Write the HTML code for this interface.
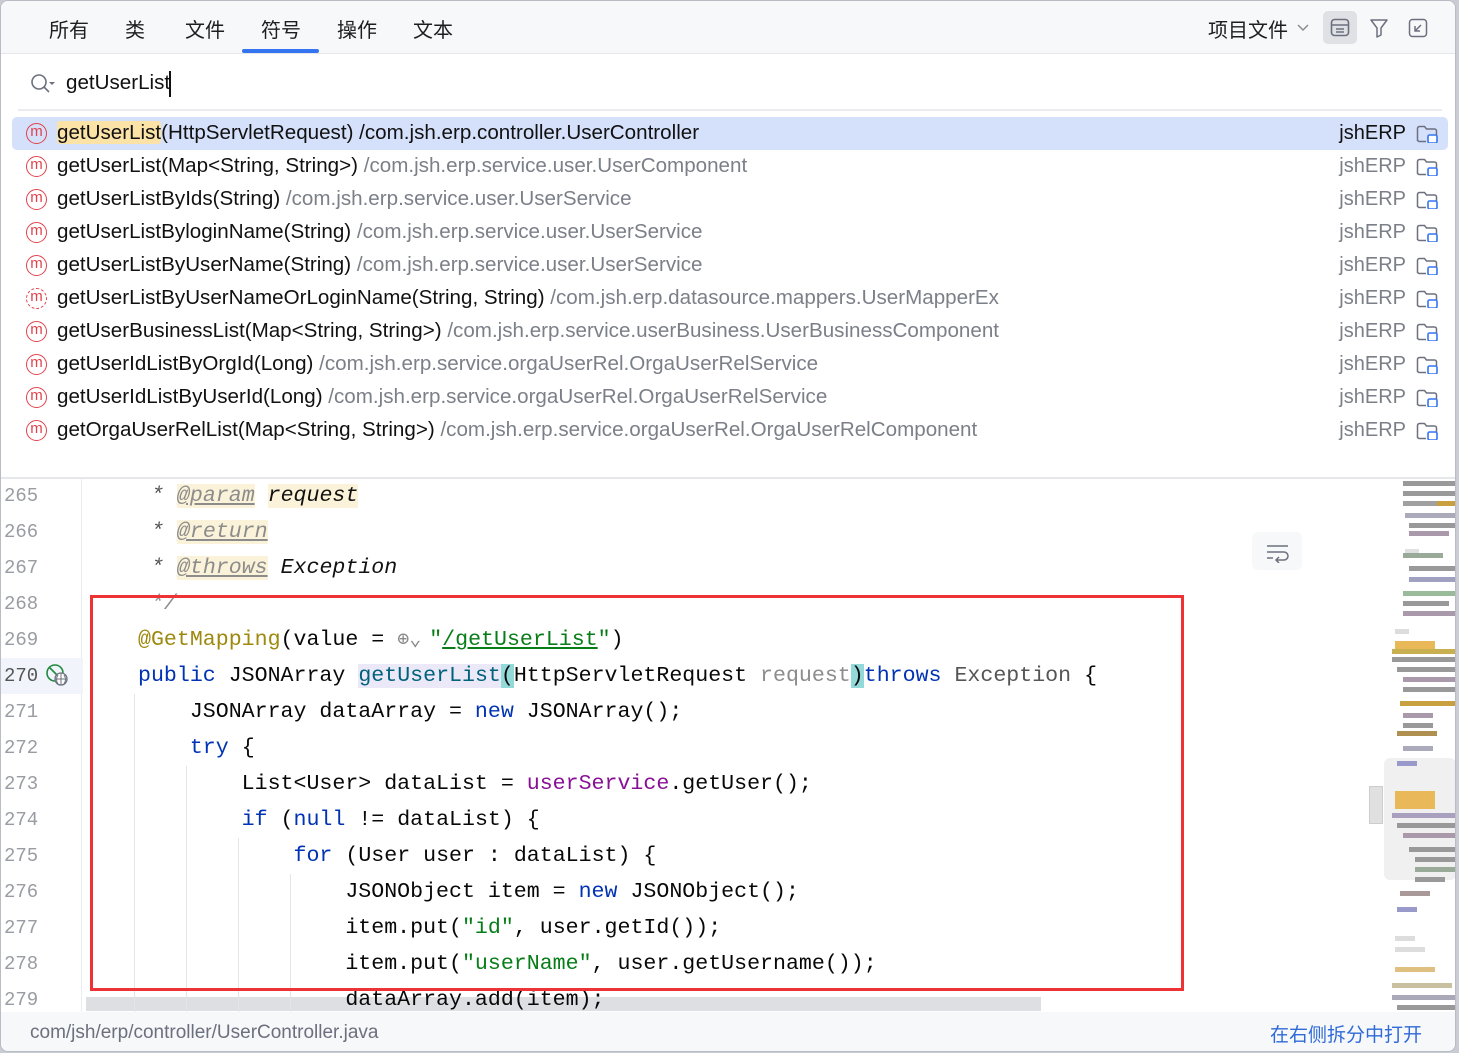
<!DOCTYPE html>
<html><head><meta charset="utf-8"><style>
*{margin:0;padding:0;box-sizing:border-box}
body{width:1459px;height:1053px;background:#c9ccd3;position:relative;overflow:hidden;font-family:"Liberation Sans","Noto Sans CJK SC",sans-serif}
#win{position:absolute;left:0;top:0;width:1456px;height:1052px;background:#fff;border:1px solid #b9bcc4;border-radius:8px;overflow:hidden}
.abs{position:absolute}
#tabs{left:0;top:0;width:100%;height:53px;background:#f7f8fa;border-bottom:1px solid #e6e7ea}
.tab{position:absolute;top:13px;font-size:20px;color:#1e1e1e;font-family:"Noto Sans CJK SC",sans-serif}
.row{position:absolute;left:11px;width:1436px;height:33px;font-size:20.6px;color:#111;white-space:nowrap}
.row .t{position:absolute;left:45px;top:4px}
.row .g{color:#7b7f88}
.ico{position:absolute;left:14px;top:6px;width:21px;height:21px;border:1.6px solid #e0424c;border-radius:50%;color:#e0424c;font-size:15px;line-height:16px;text-align:center}
.proj{position:absolute;right:42px;top:5px;color:#7b7f88;font-size:20px}
.fold{position:absolute;right:10px;top:8px;width:22px;height:18px}
.code{position:absolute;font-family:"Liberation Mono",monospace;font-size:21.6px;white-space:pre;color:#080808;height:36px;line-height:36px}
.ln{position:absolute;left:3px;font-family:"Liberation Mono",monospace;font-size:19px;color:#9a9ca3;height:36px;line-height:36px}
.kw{color:#0033b3}.cm{color:#8c8c8c;font-style:italic}.tag{color:#8c8c8c;text-decoration:underline;background:#fbf3d9}
.an{color:#9e880d}.st{color:#067d17}.fld{color:#871094}.pm{color:#8c8c8c}
.guide{position:absolute;width:1px;background:#e4e5e8}
.mm{position:absolute;height:5px}
</style></head><body>
<div id="win">
<div id="tabs" class="abs">
<div class="tab" style="left:48px">所有</div>
<div class="tab" style="left:124px">类</div>
<div class="tab" style="left:184px">文件</div>
<div class="tab" style="left:260px">符号</div>
<div class="tab" style="left:336px">操作</div>
<div class="tab" style="left:412px">文本</div>
<div class="abs" style="left:241px;top:48px;width:77px;height:4px;background:#3574f0;border-radius:2px"></div>
<div class="tab" style="left:1207px">项目文件</div>
<svg class="abs" style="left:1296px;top:22px" width="12" height="10"><path d="M1 2l5 5 5-5" fill="none" stroke="#888" stroke-width="1.4"/></svg>
<div class="abs" style="left:1322px;top:10px;width:34px;height:33px;background:#dfe1e5;border-radius:5px"></div>
<svg class="abs" style="left:1329px;top:17px" width="20" height="19"><rect x="1.5" y="1.5" width="17" height="16" rx="3" fill="none" stroke="#6c707e" stroke-width="1.6"/><path d="M1.5 7h17M6 11h8M6 14h8" stroke="#6c707e" stroke-width="1.4"/></svg>
<svg class="abs" style="left:1368px;top:17px" width="20" height="20"><path d="M2 2h16l-6 8v7l-4 2v-9z" fill="none" stroke="#6c707e" stroke-width="1.5" stroke-linejoin="round"/></svg>
<svg class="abs" style="left:1407px;top:17px" width="20" height="20"><rect x="1.5" y="1.5" width="17" height="17" rx="3" fill="none" stroke="#6c707e" stroke-width="1.5"/><path d="M13 7l-6 6M7 8v5h5" fill="none" stroke="#6c707e" stroke-width="1.5"/></svg>
</div>
<svg class="abs" style="left:29px;top:72px" width="26" height="22"><circle cx="9" cy="9" r="7" fill="none" stroke="#6c707e" stroke-width="1.6"/><path d="M14 14l5 5" stroke="#6c707e" stroke-width="1.6"/><path d="M19 9l3 3 3-3z" fill="#6c707e"/></svg>
<div class="abs" style="left:65px;top:70px;font-size:20.6px;color:#111">getUserList</div>
<div class="abs" style="left:168px;top:70px;width:1.5px;height:26px;background:#111"></div>
<div class="abs" style="left:17px;top:108px;width:1424px;height:2px;background:#ebecf0"></div>

<div class="row" style="top:116px;background:#d5e1fb;border-radius:5px"><div class="ico">m</div><div class="t"><span style="background:#fbe3a8;border-radius:3px">getUserList</span>(HttpServletRequest) /com.jsh.erp.controller.UserController</div><div class="proj" style="color:#111">jshERP</div><svg class="fold" viewBox="0 0 22 18"><path d="M1.5 16V3.5a2 2 0 0 1 2-2h5l2 2.5h8a2 2 0 0 1 2 2V10M10 16.5H3.5a2 2 0 0 1-2-2" fill="none" stroke="#6c707e" stroke-width="1.5"/><rect x="12" y="10" width="9" height="8" rx="1.5" fill="#fff" stroke="#3574f0" stroke-width="1.6"/></svg></div>
<div class="row" style="top:149px"><div class="ico">m</div><div class="t">getUserList(Map&lt;String, String&gt;) <span class="g">/com.jsh.erp.service.user.UserComponent</span></div><div class="proj">jshERP</div><svg class="fold" viewBox="0 0 22 18"><path d="M1.5 16V3.5a2 2 0 0 1 2-2h5l2 2.5h8a2 2 0 0 1 2 2V10M10 16.5H3.5a2 2 0 0 1-2-2" fill="none" stroke="#6c707e" stroke-width="1.5"/><rect x="12" y="10" width="9" height="8" rx="1.5" fill="#fff" stroke="#3574f0" stroke-width="1.6"/></svg></div>
<div class="row" style="top:182px"><div class="ico">m</div><div class="t">getUserListByIds(String) <span class="g">/com.jsh.erp.service.user.UserService</span></div><div class="proj">jshERP</div><svg class="fold" viewBox="0 0 22 18"><path d="M1.5 16V3.5a2 2 0 0 1 2-2h5l2 2.5h8a2 2 0 0 1 2 2V10M10 16.5H3.5a2 2 0 0 1-2-2" fill="none" stroke="#6c707e" stroke-width="1.5"/><rect x="12" y="10" width="9" height="8" rx="1.5" fill="#fff" stroke="#3574f0" stroke-width="1.6"/></svg></div>
<div class="row" style="top:215px"><div class="ico">m</div><div class="t">getUserListByloginName(String) <span class="g">/com.jsh.erp.service.user.UserService</span></div><div class="proj">jshERP</div><svg class="fold" viewBox="0 0 22 18"><path d="M1.5 16V3.5a2 2 0 0 1 2-2h5l2 2.5h8a2 2 0 0 1 2 2V10M10 16.5H3.5a2 2 0 0 1-2-2" fill="none" stroke="#6c707e" stroke-width="1.5"/><rect x="12" y="10" width="9" height="8" rx="1.5" fill="#fff" stroke="#3574f0" stroke-width="1.6"/></svg></div>
<div class="row" style="top:248px"><div class="ico">m</div><div class="t">getUserListByUserName(String) <span class="g">/com.jsh.erp.service.user.UserService</span></div><div class="proj">jshERP</div><svg class="fold" viewBox="0 0 22 18"><path d="M1.5 16V3.5a2 2 0 0 1 2-2h5l2 2.5h8a2 2 0 0 1 2 2V10M10 16.5H3.5a2 2 0 0 1-2-2" fill="none" stroke="#6c707e" stroke-width="1.5"/><rect x="12" y="10" width="9" height="8" rx="1.5" fill="#fff" stroke="#3574f0" stroke-width="1.6"/></svg></div>
<div class="row" style="top:281px"><div class="ico" style="border-style:dashed">m</div><div class="t">getUserListByUserNameOrLoginName(String, String) <span class="g">/com.jsh.erp.datasource.mappers.UserMapperEx</span></div><div class="proj">jshERP</div><svg class="fold" viewBox="0 0 22 18"><path d="M1.5 16V3.5a2 2 0 0 1 2-2h5l2 2.5h8a2 2 0 0 1 2 2V10M10 16.5H3.5a2 2 0 0 1-2-2" fill="none" stroke="#6c707e" stroke-width="1.5"/><rect x="12" y="10" width="9" height="8" rx="1.5" fill="#fff" stroke="#3574f0" stroke-width="1.6"/></svg></div>
<div class="row" style="top:314px"><div class="ico">m</div><div class="t">getUserBusinessList(Map&lt;String, String&gt;) <span class="g">/com.jsh.erp.service.userBusiness.UserBusinessComponent</span></div><div class="proj">jshERP</div><svg class="fold" viewBox="0 0 22 18"><path d="M1.5 16V3.5a2 2 0 0 1 2-2h5l2 2.5h8a2 2 0 0 1 2 2V10M10 16.5H3.5a2 2 0 0 1-2-2" fill="none" stroke="#6c707e" stroke-width="1.5"/><rect x="12" y="10" width="9" height="8" rx="1.5" fill="#fff" stroke="#3574f0" stroke-width="1.6"/></svg></div>
<div class="row" style="top:347px"><div class="ico">m</div><div class="t">getUserIdListByOrgId(Long) <span class="g">/com.jsh.erp.service.orgaUserRel.OrgaUserRelService</span></div><div class="proj">jshERP</div><svg class="fold" viewBox="0 0 22 18"><path d="M1.5 16V3.5a2 2 0 0 1 2-2h5l2 2.5h8a2 2 0 0 1 2 2V10M10 16.5H3.5a2 2 0 0 1-2-2" fill="none" stroke="#6c707e" stroke-width="1.5"/><rect x="12" y="10" width="9" height="8" rx="1.5" fill="#fff" stroke="#3574f0" stroke-width="1.6"/></svg></div>
<div class="row" style="top:380px"><div class="ico">m</div><div class="t">getUserIdListByUserId(Long) <span class="g">/com.jsh.erp.service.orgaUserRel.OrgaUserRelService</span></div><div class="proj">jshERP</div><svg class="fold" viewBox="0 0 22 18"><path d="M1.5 16V3.5a2 2 0 0 1 2-2h5l2 2.5h8a2 2 0 0 1 2 2V10M10 16.5H3.5a2 2 0 0 1-2-2" fill="none" stroke="#6c707e" stroke-width="1.5"/><rect x="12" y="10" width="9" height="8" rx="1.5" fill="#fff" stroke="#3574f0" stroke-width="1.6"/></svg></div>
<div class="row" style="top:413px"><div class="ico">m</div><div class="t">getOrgaUserRelList(Map&lt;String, String&gt;) <span class="g">/com.jsh.erp.service.orgaUserRel.OrgaUserRelComponent</span></div><div class="proj">jshERP</div><svg class="fold" viewBox="0 0 22 18"><path d="M1.5 16V3.5a2 2 0 0 1 2-2h5l2 2.5h8a2 2 0 0 1 2 2V10M10 16.5H3.5a2 2 0 0 1-2-2" fill="none" stroke="#6c707e" stroke-width="1.5"/><rect x="12" y="10" width="9" height="8" rx="1.5" fill="#fff" stroke="#3574f0" stroke-width="1.6"/></svg></div>

<div class="abs" style="left:0;top:476px;width:100%;height:2px;background:#e6e7ea"></div>
<!-- gutter -->
<div class="abs" style="left:80px;top:478px;width:1px;height:534px;background:#ebecf0"></div>
<div class="abs" style="left:0;top:657px;width:82px;height:36px;background:#f2f4fb"></div>
<div class="ln" style="top:477px">265</div><div class="ln" style="top:513px">266</div><div class="ln" style="top:549px">267</div><div class="ln" style="top:585px">268</div><div class="ln" style="top:621px">269</div><div class="ln" style="top:657px;color:#555">270</div><div class="ln" style="top:693px">271</div><div class="ln" style="top:729px">272</div><div class="ln" style="top:765px">273</div><div class="ln" style="top:801px">274</div><div class="ln" style="top:837px">275</div><div class="ln" style="top:873px">276</div><div class="ln" style="top:909px">277</div><div class="ln" style="top:945px">278</div><div class="ln" style="top:981px">279</div>
<svg class="abs" style="left:44px;top:662px" width="24" height="24"><circle cx="10" cy="10" r="8" fill="none" stroke="#208a3c" stroke-width="1.6"/><path d="M4 4l10 10" stroke="#208a3c" stroke-width="1.6"/><circle cx="16" cy="16" r="6" fill="#fff" stroke="#6c707e" stroke-width="1.3"/><path d="M10 16h12M16 10v12M13 12c-2 3-2 6 0 9M19 12c2 3 2 6 0 9" fill="none" stroke="#6c707e" stroke-width="1"/></svg>
<!-- scrollbar (behind text) -->
<div class="abs" style="left:85px;top:996px;width:955px;height:14px;background:#dedfe2"></div>
<!-- guides -->
<div class="guide" style="left:133px;top:693px;height:318px"></div>
<div class="guide" style="left:185px;top:765px;height:246px"></div>
<div class="guide" style="left:237px;top:837px;height:174px"></div>
<div class="guide" style="left:289px;top:873px;height:138px"></div>
<!-- code -->
<div class="code cm" style="left:137px;top:477px"> <span style="color:#555">*</span> <span class="tag">@param</span> <span style="background:#fbf3d9;color:#111">request</span></div>
<div class="code cm" style="left:137px;top:513px"> <span style="color:#555">*</span> <span class="tag">@return</span></div>
<div class="code cm" style="left:137px;top:549px"> <span style="color:#555">*</span> <span class="tag">@throws</span> <span style="color:#111">Exception</span></div>
<div class="code cm" style="left:137px;top:585px"> */</div>
<div class="code" style="left:137px;top:621px"><span class="an">@GetMapping</span>(value = <span style="display:inline-block;width:32px;color:#888;font-size:20px;font-style:normal">⊕⌄</span><span class="st">"<u>/getUserList</u>"</span>)</div>
<div class="code" style="left:137px;top:657px"><span class="kw">public</span> JSONArray <span style="background:#ebe8f8;color:#00627a">getUserList</span><span style="background:#93d9d9">(</span>HttpServletRequest <span class="pm">request</span><span style="background:#93d9d9">)</span><span class="kw">throws</span> <span style="color:#555">Exception</span> {</div>
<div class="code" style="left:137px;top:693px">    JSONArray dataArray = <span class="kw">new</span> JSONArray();</div>
<div class="code" style="left:137px;top:729px">    <span class="kw">try</span> {</div>
<div class="code" style="left:137px;top:765px">        List&lt;User&gt; dataList = <span class="fld">userService</span>.getUser();</div>
<div class="code" style="left:137px;top:801px">        <span class="kw">if</span> (<span class="kw">null</span> != dataList) {</div>
<div class="code" style="left:137px;top:837px">            <span class="kw">for</span> (User user : dataList) {</div>
<div class="code" style="left:137px;top:873px">                JSONObject item = <span class="kw">new</span> JSONObject();</div>
<div class="code" style="left:137px;top:909px">                item.put(<span class="st">"id"</span>, user.getId());</div>
<div class="code" style="left:137px;top:945px">                item.put(<span class="st">"userName"</span>, user.getUsername());</div>
<div class="code" style="left:137px;top:981px">                dataArray.add(item);</div>
<div class="abs" style="left:89px;top:594px;width:1094px;height:396px;border:3px solid #ee3336"></div>
<!-- wrap button -->
<div class="abs" style="left:1251px;top:531px;width:50px;height:38px;background:#f7f8fa;border-radius:6px"></div>
<svg class="abs" style="left:1265px;top:542px" width="24" height="20"><path d="M1 3h21M1 9h17a4 4 0 0 1 0 8h-7M1 15h6M13 14l-3 3 3 3" fill="none" stroke="#6c707e" stroke-width="1.5"/></svg>
<!-- minimap -->
<div class="abs" style="left:1383px;top:757px;width:72px;height:122px;background:#f0f0f0;border-radius:6px"></div>
<div class="abs" style="left:1368px;top:785px;width:14px;height:38px;background:#e0e0e0;border:1px solid #ccc"></div>
<div class="mm" style="left:1402px;top:480px;width:52px;background:#999"></div>
<div class="mm" style="left:1402px;top:490px;width:52px;background:#999"></div>
<div class="mm" style="left:1402px;top:500px;width:52px;background:#a0a0a0"></div>
<div class="mm" style="left:1436px;top:500px;width:18px;background:#c9a040"></div>
<div class="mm" style="left:1404px;top:512px;width:50px;background:#aab"></div>
<div class="mm" style="left:1408px;top:522px;width:46px;background:#999"></div>
<div class="mm" style="left:1408px;top:530px;width:40px;background:#a9a"></div>
<div class="mm" style="left:1404px;top:548px;width:14px;background:#e0e0e0"></div>
<div class="mm" style="left:1402px;top:552px;width:40px;background:#9a9"></div>
<div class="mm" style="left:1408px;top:565px;width:46px;background:#999"></div>
<div class="mm" style="left:1408px;top:576px;width:46px;background:#a0a0c0"></div>
<div class="mm" style="left:1402px;top:590px;width:52px;background:#9b9"></div>
<div class="mm" style="left:1402px;top:600px;width:46px;background:#999"></div>
<div class="mm" style="left:1402px;top:610px;width:52px;background:#a9a"></div>
<div class="mm" style="left:1394px;top:628px;width:14px;background:#ddd"></div>
<div class="mm" style="left:1394px;top:640px;width:40px;background:#e9b858;height:10px"></div>
<div class="mm" style="left:1391px;top:648px;width:64px;background:#c8b050"></div>
<div class="mm" style="left:1391px;top:656px;width:64px;background:#999"></div>
<div class="mm" style="left:1396px;top:666px;width:58px;background:#999"></div>
<div class="mm" style="left:1402px;top:676px;width:52px;background:#a9a"></div>
<div class="mm" style="left:1402px;top:686px;width:52px;background:#999"></div>
<div class="mm" style="left:1399px;top:700px;width:55px;background:#c9a040"></div>
<div class="mm" style="left:1402px;top:712px;width:30px;background:#a9a"></div>
<div class="mm" style="left:1402px;top:722px;width:30px;background:#999"></div>
<div class="mm" style="left:1396px;top:730px;width:40px;background:#b09050"></div>
<div class="mm" style="left:1402px;top:745px;width:30px;background:#aab"></div>
<div class="mm" style="left:1396px;top:760px;width:20px;background:#99c"></div>
<div class="mm" style="left:1394px;top:790px;width:40px;background:#e9b858;height:18px"></div>
<div class="mm" style="left:1391px;top:812px;width:64px;background:#a9a0c0"></div>
<div class="mm" style="left:1396px;top:822px;width:58px;background:#999"></div>
<div class="mm" style="left:1402px;top:832px;width:52px;background:#a9a"></div>
<div class="mm" style="left:1408px;top:846px;width:46px;background:#999"></div>
<div class="mm" style="left:1414px;top:856px;width:40px;background:#999"></div>
<div class="mm" style="left:1414px;top:866px;width:40px;background:#9a9"></div>
<div class="mm" style="left:1414px;top:876px;width:30px;background:#999"></div>
<div class="mm" style="left:1399px;top:890px;width:30px;background:#a99"></div>
<div class="mm" style="left:1396px;top:906px;width:20px;background:#99c"></div>
<div class="mm" style="left:1394px;top:935px;width:20px;background:#ddd"></div>
<div class="mm" style="left:1394px;top:946px;width:30px;background:#ddd"></div>
<div class="mm" style="left:1394px;top:966px;width:40px;background:#e0c080"></div>
<div class="mm" style="left:1391px;top:982px;width:60px;background:#c9c0a0"></div>
<div class="mm" style="left:1391px;top:994px;width:64px;background:#a9a9b9"></div>
<div class="mm" style="left:1396px;top:1004px;width:58px;background:#999"></div>
<!-- status -->
<div class="abs" style="left:0;top:1011px;width:100%;height:41px;background:#f7f8fa"></div>
<div class="abs" style="left:29px;top:1021px;font-size:19px;color:#6c707e">com/jsh/erp/controller/UserController.java</div>
<div class="abs" style="left:1269px;top:1019px;font-size:19px;color:#2f6ad8;font-family:'Noto Sans CJK SC',sans-serif">在右侧拆分中打开</div>
</div>
</body></html>
